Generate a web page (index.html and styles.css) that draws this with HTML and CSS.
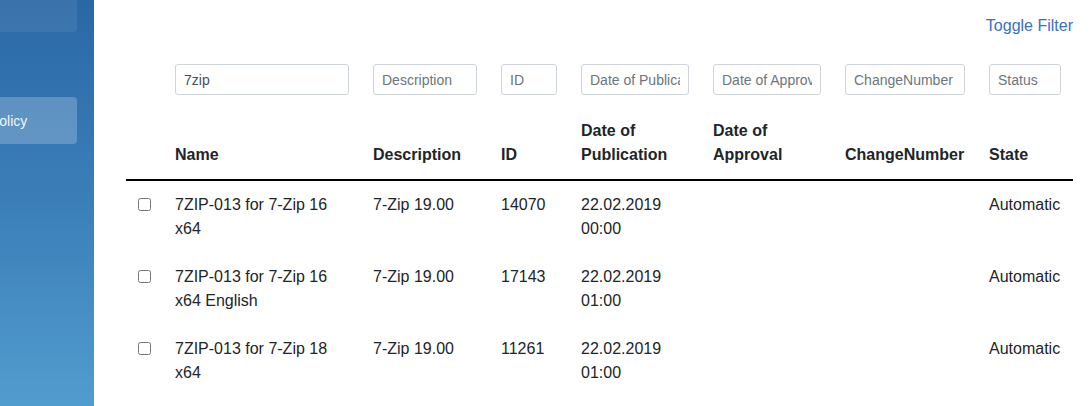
FILE: index.html
```html
<!DOCTYPE html>
<html lang="en">
<head>
<meta charset="utf-8">
<title>Packages</title>
<link rel="stylesheet" href="styles.css">
</head>
<body>
<div class="app">
  <aside class="sidebar">
    <nav class="nav">
      <a class="nav-item nav-top"></a>
      <a class="nav-item nav-active">Policy</a>
    </nav>
  </aside>
  <main class="content">
    <div class="toolbar"><a class="toggle" href="#">Toggle Filter</a></div>
    <table class="grid">
      <colgroup>
        <col class="c-check"><col class="c-name"><col class="c-desc"><col class="c-id"><col class="c-pub"><col class="c-appr"><col class="c-change"><col class="c-state">
      </colgroup>
      <thead>
        <tr class="filters">
          <td></td>
          <td><input class="field" type="text" value="7zip" placeholder="Name"></td>
          <td><input class="field" type="text" placeholder="Description"></td>
          <td><input class="field" type="text" placeholder="ID"></td>
          <td><input class="field" type="text" placeholder="Date of Publication"></td>
          <td><input class="field" type="text" placeholder="Date of Approval"></td>
          <td><input class="field" type="text" placeholder="ChangeNumber"></td>
          <td><input class="field" type="text" placeholder="Status"></td>
        </tr>
        <tr class="heads">
          <th></th>
          <th>Name</th>
          <th>Description</th>
          <th>ID</th>
          <th>Date of Publication</th>
          <th>Date of Approval</th>
          <th class="nowrap">ChangeNumber</th>
          <th>State</th>
        </tr>
      </thead>
      <tbody>
        <tr>
          <td><input class="check" type="checkbox"></td>
          <td>7ZIP-013 for 7-Zip 16 x64</td>
          <td>7-Zip 19.00</td>
          <td>14070</td>
          <td>22.02.2019 00:00</td>
          <td></td>
          <td></td>
          <td>Automatic</td>
        </tr>
        <tr>
          <td><input class="check" type="checkbox"></td>
          <td>7ZIP-013 for 7-Zip 16 x64 English</td>
          <td>7-Zip 19.00</td>
          <td>17143</td>
          <td>22.02.2019 01:00</td>
          <td></td>
          <td></td>
          <td>Automatic</td>
        </tr>
        <tr>
          <td><input class="check" type="checkbox"></td>
          <td>7ZIP-013 for 7-Zip 18 x64</td>
          <td>7-Zip 19.00</td>
          <td>11261</td>
          <td>22.02.2019 01:00</td>
          <td></td>
          <td></td>
          <td>Automatic</td>
        </tr>
      </tbody>
    </table>
  </main>
</div>
</body>
</html>
```
FILE: styles.css
```css
* { box-sizing: border-box; }

html, body {
  margin: 0;
  height: 100%;
  overflow: hidden;
}

body {
  font-family: "Liberation Sans", Arial, sans-serif;
  font-size: 16px;
  line-height: 24px;
  color: #212529;
  background: #fff;
}

.app {
  display: flex;
  height: 406px;
}

.sidebar {
  flex: 0 0 94px;
  width: 94px;
  height: 100%;
  overflow: hidden;
  background: linear-gradient(to bottom, #2a68a5 0%, #3b7fb9 50%, #519cce 100%);
}

.nav {
  display: flex;
  flex-direction: column;
  gap: 65px;
  padding-right: 17px;
  margin-top: -15px;
}

.nav-item {
  display: flex;
  align-items: center;
  height: 47px;
  margin-left: -26px;
  padding-left: 16px;
  border-radius: 4px;
  font-size: 14px;
  color: rgba(255, 255, 255, 0.95);
  text-decoration: none;
}

.nav-top {
  background: rgba(255, 255, 255, 0.08);
}

.nav-active {
  background: rgba(255, 255, 255, 0.22);
}

.content {
  flex: 1;
  padding: 14px 17px 0 32px;
}

.toolbar {
  display: flex;
  justify-content: flex-end;
  margin-bottom: 14px;
}

.toggle {
  color: #3870c8;
  text-decoration: none;
}

.grid {
  width: 100%;
  table-layout: fixed;
  border-collapse: collapse;
}

.c-check { width: 37px; }
.c-name { width: 198px; }
.c-desc { width: 128px; }
.c-id { width: 80px; }
.c-pub { width: 132px; }
.c-appr { width: 132px; }
.c-change { width: 144px; }
.c-state { width: 96px; }

.grid td,
.grid th {
  padding: 12px;
  text-align: left;
  vertical-align: top;
}

.heads th {
  font-weight: bold;
  vertical-align: bottom;
  border-bottom: 2px solid #000;
}

.nowrap { white-space: nowrap; }

.field {
  display: block;
  width: 100%;
  height: 31px;
  padding: 4px 8px;
  font-family: "Liberation Sans", Arial, sans-serif;
  font-size: 14px;
  line-height: 21px;
  color: #495057;
  background: #fff;
  border: 1px solid #ced4da;
  border-radius: 3px;
  outline: none;
}

.field::placeholder {
  color: #6c757d;
  opacity: 1;
}

.check {
  margin: 0;
  width: 13px;
  height: 13px;
  vertical-align: -1px;
}
```
